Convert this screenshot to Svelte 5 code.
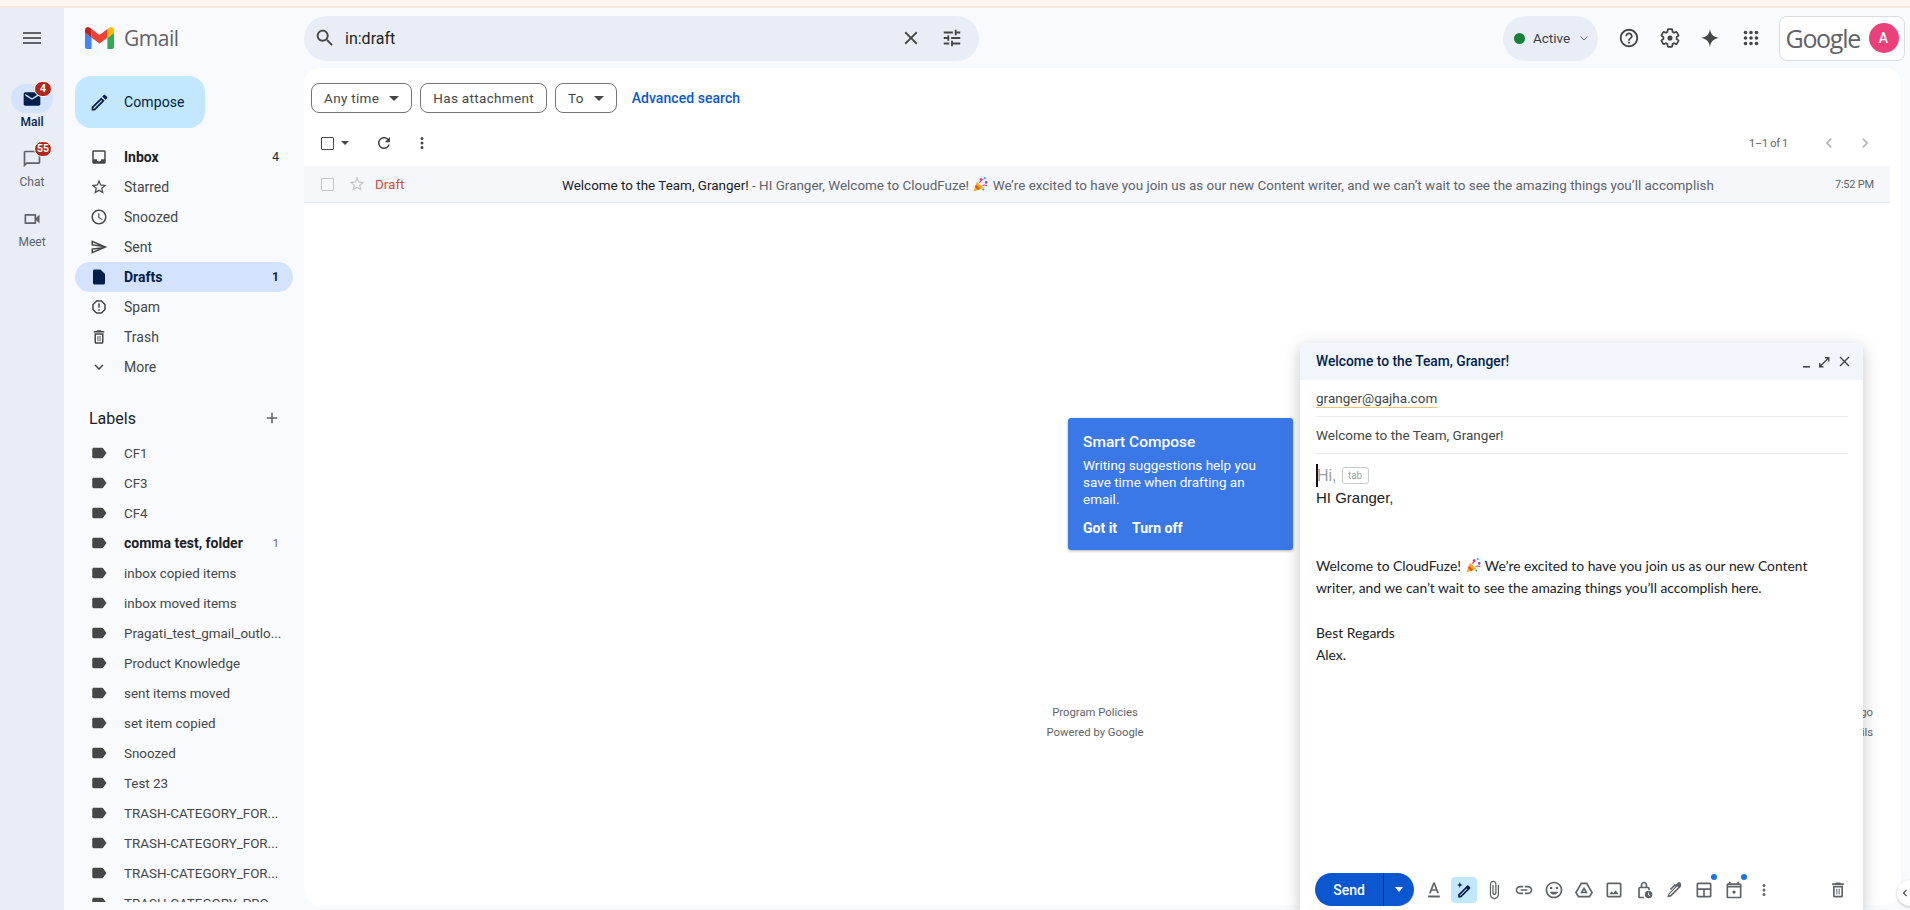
<script lang="ts">
  const icons: Record<string, string> = {
    menu: "M3 18h18v-2H3v2zm0-5h18v-2H3v2zm0-7v2h18V6H3z",
    search: "M15.5 14h-.79l-.28-.27C15.41 12.59 16 11.11 16 9.5 16 5.91 13.09 3 9.5 3S3 5.91 3 9.5 5.91 16 9.5 16c1.61 0 3.09-.59 4.23-1.57l.27.28v.79l5 4.99L20.49 19l-4.99-5zm-6 0C7.01 14 5 11.99 5 9.5S7.01 5 9.5 5 14 7.01 14 9.5 11.99 14 9.5 14z",
    close: "M19 6.41L17.59 5 12 10.59 6.41 5 5 6.41 10.59 12 5 17.59 6.41 19 12 13.41 17.59 19 19 17.59 13.41 12z",
    tune: "M3 17v2h6v-2H3zM3 5v2h10V5H3zm10 16v-2h8v-2h-8v-2h-2v6h2zM7 9v2H3v2h4v2h2V9H7zm14 4v-2H11v2h10zm-6-4h2V7h4V5h-4V3h-2v6z",
    help: "M11 18h2v-2h-2v2zm1-16C6.48 2 2 6.48 2 12s4.48 10 10 10 10-4.48 10-10S17.52 2 12 2zm0 18c-4.41 0-8-3.59-8-8s3.59-8 8-8 8 3.59 8 8-3.59 8-8 8zm0-14c-2.21 0-4 1.79-4 4h2c0-1.1.9-2 2-2s2 .9 2 2c0 2-3 1.75-3 5h2c0-2.25 3-2.5 3-5 0-2.21-1.79-4-4-4z",
    spark: "M12 2C12.6 8 16 11.4 22 12 16 12.6 12.6 16 12 22 11.4 16 8 12.6 2 12 8 11.4 11.4 8 12 2z",
    apps: "M6 4a2 2 0 1 0 0 4 2 2 0 0 0 0-4zm6 0a2 2 0 1 0 0 4 2 2 0 0 0 0-4zm6 0a2 2 0 1 0 0 4 2 2 0 0 0 0-4zM6 10a2 2 0 1 0 0 4 2 2 0 0 0 0-4zm6 0a2 2 0 1 0 0 4 2 2 0 0 0 0-4zm6 0a2 2 0 1 0 0 4 2 2 0 0 0 0-4zM6 16a2 2 0 1 0 0 4 2 2 0 0 0 0-4zm6 0a2 2 0 1 0 0 4 2 2 0 0 0 0-4zm6 0a2 2 0 1 0 0 4 2 2 0 0 0 0-4z",
    edit: "M14.06 9.02l.92.92L5.92 19H5v-.92l9.06-9.06M17.66 3c-.25 0-.51.1-.7.29l-1.83 1.83 3.75 3.75 1.83-1.83c.39-.39.39-1.02 0-1.41l-2.34-2.34c-.2-.2-.45-.29-.71-.29zm-3.6 3.19L3 17.25V21h3.75L17.81 9.94l-3.75-3.75z",
    inbox: "M19 3H4.99c-1.11 0-1.98.89-1.98 2L3 19c0 1.1.88 2 1.99 2H19c1.1 0 2-.9 2-2V5c0-1.11-.9-2-2-2zm0 12h-4c0 1.66-1.35 3-3 3s-3-1.34-3-3H4.99V5H19v10z",
    star: "M22 9.24l-7.19-.62L12 2 9.19 8.63 2 9.24l5.46 4.73L5.82 21 12 17.27 18.18 21l-1.63-7.03L22 9.24zM12 15.4l-3.76 2.27 1-4.28-3.32-2.88 4.38-.38L12 6.1l1.71 4.04 4.38.38-3.32 2.88 1 4.28L12 15.4z",
    clock: "M11.99 2C6.47 2 2 6.48 2 12s4.47 10 9.99 10C17.52 22 22 17.52 22 12S17.52 2 11.99 2zM12 20c-4.42 0-8-3.58-8-8s3.58-8 8-8 8 3.58 8 8-3.58 8-8 8zM12.5 7H11v6l5.25 3.15.75-1.23-4.5-2.67z",
    send: "M4.01 6.03l7.51 3.22-7.52-1 .01-2.22m7.5 8.72L4 17.97v-2.22l7.51-1M2.01 3L2 10l15 2-15 2 .01 7L23 12 2.01 3z",
    draft: "M6 2c-1.1 0-2 .9-2 2v16c0 1.1.89 2 1.99 2H18c1.1 0 2-.9 2-2V8l-6-6H6z",
    spam: "M15.73 3H8.27L3 8.27v7.46L8.27 21h7.46L21 15.73V8.27L15.73 3zM19 14.9L14.9 19H9.1L5 14.9V9.1L9.1 5h5.8L19 9.1v5.8zM11 7h2v6h-2zM11 15h2v2h-2z",
    trash: "M16 9v10H8V9h8m-1.5-6h-5l-1 1H5v2h14V4h-3.5l-1-1zM18 7H6v12c0 1.1.9 2 2 2h8c1.1 0 2-.9 2-2V7zM10 10.5h1.2v7H10zM12.8 10.5H14v7h-1.2z",
    more: "M16.59 8.59L12 13.17 7.41 8.59 6 10l6 6 6-6z",
    add: "M19 13h-6v6h-2v-6H5v-2h6V5h2v6h6v2z",
    label: "M17.63 5.84C17.27 5.33 16.67 5 16 5L5 5.01C3.9 5.01 3 5.9 3 7v10c0 1.1.9 1.99 2 1.99L16 19c.67 0 1.27-.33 1.63-.84L22 12l-4.37-6.16z",
    refresh: "M17.65 6.35C16.2 4.9 14.21 4 12 4c-4.42 0-7.99 3.58-7.99 8s3.57 8 7.99 8c3.73 0 6.84-2.55 7.73-6h-2.08c-.82 2.33-3.04 4-5.65 4-3.31 0-6-2.69-6-6s2.69-6 6-6c1.66 0 3.14.69 4.22 1.78L13 11h7V4l-2.35 2.35z",
    dots: "M12 8a2 2 0 1 0 0-4 2 2 0 0 0 0 4zm0 2a2 2 0 1 0 0 4 2 2 0 0 0 0-4zm0 6a2 2 0 1 0 0 4 2 2 0 0 0 0-4z",
    left: "M15.41 7.41L14 6l-6 6 6 6 1.41-1.41L10.83 12z",
    right: "M10 6L8.59 7.41 13.17 12l-4.58 4.59L10 18l6-6z",
    mail: "M20 4H4c-1.1 0-1.99.9-1.99 2L2 18c0 1.1.9 2 2 2h16c1.1 0 2-.9 2-2V6c0-1.1-.9-2-2-2zm0 4l-8 5-8-5V6l8 5 8-5v2z",
    chat: "M20 2H4c-1.1 0-2 .9-2 2v18l4-4h14c1.1 0 2-.9 2-2V4c0-1.1-.9-2-2-2zm0 14H5.17L4 17.17V4h16v12z",
    meet: "M15 8v8H5V8h10m1-2H4c-.55 0-1 .45-1 1v10c0 .55.45 1 1 1h12c.55 0 1-.45 1-1v-3.5l4 4v-11l-4 4V7c0-.55-.45-1-1-1z",
    format: "M5 18.5h14V21H5zM11 3L6 16h2.25l1.12-3h5.26l1.12 3H18L13 3h-2zm-.9 8L12 5.67 13.9 11h-3.8z",
    smart: "M18.9 8.2l-1.6-1.6a1.1 1.1 0 0 0-1.5 0L5 17.4V21h3.6L19.4 10.2c.4-.4.4-1.1 0-1.5l-.5-.5zM7.8 19H7v-.8l8-8 .8.8-8 8zM7 2.5l.9 2.6 2.6.9-2.6.9L7 9.5l-.9-2.6L3.5 6l2.6-.9z",
    attach: "M16.5 6v11.5c0 2.21-1.79 4-4 4s-4-1.79-4-4V5c0-1.38 1.12-2.5 2.5-2.5s2.5 1.12 2.5 2.5v10.5c0 .55-.45 1-1 1s-1-.45-1-1V6H10v9.5c0 1.38 1.12 2.5 2.5 2.5s2.5-1.12 2.5-2.5V5c0-2.21-1.79-4-4-4S7 2.79 7 5v12.5c0 3.04 2.46 5.5 5.5 5.5s5.5-2.46 5.5-5.5V6h-1.5z",
    link: "M3.9 12c0-1.71 1.39-3.1 3.1-3.1h4V7H7c-2.76 0-5 2.24-5 5s2.24 5 5 5h4v-1.9H7c-1.71 0-3.1-1.39-3.1-3.1zM8 13h8v-2H8v2zm9-6h-4v1.9h4c1.71 0 3.1 1.39 3.1 3.1s-1.39 3.1-3.1 3.1h-4V17h4c2.76 0 5-2.24 5-5s-2.24-5-5-5z",
    emoji: "M11.99 2C6.47 2 2 6.48 2 12s4.47 10 9.99 10C17.52 22 22 17.52 22 12S17.52 2 11.99 2zM12 20c-4.42 0-8-3.58-8-8s3.58-8 8-8 8 3.58 8 8-3.58 8-8 8zM8.5 8a1.5 1.5 0 1 0 0 3 1.5 1.5 0 0 0 0-3zm7 0a1.5 1.5 0 1 0 0 3 1.5 1.5 0 0 0 0-3zM12 17.5c2.33 0 4.31-1.46 5.11-3.5H6.89c.8 2.04 2.78 3.5 5.11 3.5z",
    drive: "M8.2 3h7.6l7 12-3.6 6H4.8l-3.6-6 7-12zm1.15 2L3.5 15l2.45 4h12.1l2.45-4-5.85-10H9.35zM12 8.2l4.6 7.8H7.4L12 8.2zm0 3.9L10.9 14h2.2L12 12.1z",
    photo: "M19 3H5c-1.1 0-2 .9-2 2v14c0 1.1.9 2 2 2h14c1.1 0 2-.9 2-2V5c0-1.1-.9-2-2-2zm0 16H5V5h14v14zM13.96 12.29l-2.75 3.54-1.96-2.36L6.5 17h11z",
    lock: "M17 8h-1V6c0-2.2-1.8-4-4-4S8 3.800 8 6v2H7c-1.1 0-2 .9-2 2v10c0 1.1.9 2 2 2h5v-2H7V10h10v2h2v-2c0-1.100-.9-2-2-2zm-3 0h-4V6c0-1.100.9-2 2-2s2 .9 2 2v2zM17.500 13a4.500 4.500 0 1 0 0 9 4.500 4.500 0 0 0 0-9zm.5 2v2.300l1.500 1-.6.8-1.900-1.300V15h1z",
    pen: "M19.700 3.300a2.300 2.300 0 0 0-3.300 0L14 5.700l-1-1-6 6 1.400 1.400L13 7.500l.6.6-8.300 8.300L4 21l4.600-1.300L20 8.300c1-.9 1-3.500-.3-5zM7.600 18l-1.400.4.400-1.400L16 7.600l1 1L7.600 18z",
    layout: "M19 3H5c-1.100 0-2 .9-2 2v14c0 1.100.9 2 2 2h14c1.100 0 2-.9 2-2V5c0-1.100-.9-2-2-2zM5 5h14v5H5V5zm0 7h6v7H5v-7zm8 7v-7h6v7h-6z",
    cal: "M19 4h-1V2h-2v2H8V2H6v2H5c-1.100 0-2 .9-2 2v14c0 1.100.9 2 2 2h14c1.100 0 2-.9 2-2V6c0-1.100-.9-2-2-2zm0 16H5V9h14v11zm0-13H5V6h14v1zM12 12.500a2 2 0 1 0 0 4 2 2 0 0 0 0-4z",
  };

  const nav = [
    { name: "Inbox", icon: "inbox", count: "4", bold: true },
    { name: "Starred", icon: "star" },
    { name: "Snoozed", icon: "clock" },
    { name: "Sent", icon: "send" },
    { name: "Drafts", icon: "draft", count: "1", active: true },
    { name: "Spam", icon: "spam" },
    { name: "Trash", icon: "trash" },
    { name: "More", icon: "more" },
  ];

  const labels = [
    "CF1", "CF3", "CF4", "comma test, folder", "inbox copied items", "inbox moved items",
    "Pragati_test_gmail_outlo...", "Product Knowledge", "sent items moved", "set item copied",
    "Snoozed", "Test 23", "TRASH-CATEGORY_FOR...", "TRASH-CATEGORY_FOR...",
    "TRASH-CATEGORY_FOR...", "TRASH-CATEGORY_PRO...",
  ];

  const tools = ["format", "smart", "attach", "link", "emoji", "drive", "photo", "lock", "pen", "layout", "cal", "dots"];
</script>

{#snippet icon(name: string, size: number, color: string)}
  <svg class="ico" width={size} height={size} viewBox="0 0 24 24" fill={color}><path d={icons[name]} /></svg>
{/snippet}

{#snippet popper()}
  <svg class="popper" width="17" height="17" viewBox="0 0 24 24">
    <path d="M2 22l5-14 9 9z" fill="#f9a825" />
    <path d="M5.500 12.500l6 6-3 1.200-4.200-4.200z" fill="#e65100" />
    <circle cx="13" cy="5" r="2" fill="#e91e63" />
    <circle cx="20" cy="9" r="2" fill="#7e57c2" />
    <circle cx="18" cy="3" r="1.500" fill="#29b6f6" />
    <path d="M10 9c3-1 3-4 3-4M15 14c2-2 5-1 6 0" stroke="#ec407a" stroke-width="1.600" fill="none" />
    <circle cx="16" cy="19" r="1.500" fill="#43a047" />
  </svg>
{/snippet}

<div class="page">
  <div class="strip"></div>

  <div class="shell">
    <aside class="rail">
      {@render icon("menu", 24, "#5f6368")}
      <div class="rail-items">
        <div class="rail-item current">
          <div class="pill">
            {@render icon("mail", 20, "#041e49")}
            <span class="badge">4</span>
          </div>
          <span>Mail</span>
        </div>
        <div class="rail-item">
          <div class="pill">
            {@render icon("chat", 20, "#5f6368")}
            <span class="badge">55</span>
          </div>
          <span>Chat</span>
        </div>
        <div class="rail-item">
          <div class="pill">{@render icon("meet", 20, "#5f6368")}</div>
          <span>Meet</span>
        </div>
      </div>
    </aside>

    <nav class="side">
      <div class="brand">
        <svg width="29" height="22" viewBox="52 42 88 66">
          <path fill="#4285f4" d="M58 108h14V74L52 59v43c0 3.320 2.690 6 6 6" />
          <path fill="#34a853" d="M120 108h14c3.320 0 6-2.690 6-6V59l-20 15" />
          <path fill="#fbbc04" d="M120 48v26l20-15v-8c0-7.420-8.470-11.650-14.400-7.200" />
          <path fill="#ea4335" d="M72 74V48l24 18 24-18v26L96 92" />
          <path fill="#c5221f" d="M52 51v8l20 15V48l-5.600-4.200c-5.940-4.450-14.400-.22-14.400 7.200" />
        </svg>
        <span class="wordmark">Gmail</span>
      </div>

      <button class="compose">
        {@render icon("edit", 21, "#041e49")}
        <span>Compose</span>
      </button>

      <ul class="folders">
        {#each nav as item}
          <li class="row" class:active={item.active} class:bold={item.bold}>
            {@render icon(item.icon, 18, item.active ? "#041e49" : "#444746")}
            <span class="name">{item.name}</span>
            {#if item.count}<span class="count">{item.count}</span>{/if}
          </li>
        {/each}
      </ul>

      <div class="labels-head">
        <span>Labels</span>
        {@render icon("add", 18, "#5f6368")}
      </div>

      <ul class="folders label-list">
        {#each labels as name}
          <li class="row" class:bold={name.startsWith("comma")}>
            {@render icon("label", 18, "#444746")}
            <span class="name">{name}</span>
            {#if name.startsWith("comma")}<span class="count small">1</span>{/if}
          </li>
        {/each}
      </ul>
    </nav>

    <div class="content">
      <header class="topbar">
        <div class="search">
          {@render icon("search", 22, "#444746")}
          <span class="query">in:draft</span>
          <span class="search-end">
            {@render icon("close", 22, "#444746")}
            {@render icon("tune", 22, "#444746")}
          </span>
        </div>

        <div class="status">
          <span class="dot"></span>
          <span>Active</span>
          <svg class="chev" width="10" height="10" viewBox="0 0 10 10"><path d="M1.500 3.500L5 7l3.500-3.500" fill="none" stroke="#5f6368" stroke-width="1" /></svg>
        </div>

        <div class="top-icons">
          {@render icon("help", 22, "#444746")}
          <svg width="22" height="22" viewBox="0 0 24 24">
            <path d="M19.140 12.940c.04-.3.060-.61.060-.94 0-.32-.02-.64-.07-.94l2.030-1.580c.18-.14.23-.41.12-.61l-1.920-3.320c-.12-.22-.37-.29-.59-.22l-2.390.96c-.5-.38-1.030-.7-1.620-.94l-.36-2.540c-.04-.24-.24-.41-.48-.41h-3.840c-.24 0-.43.17-.47.41l-.36 2.540c-.59.24-1.130.57-1.620.94l-2.390-.96c-.22-.08-.47 0-.59.22L2.740 8.870c-.12.21-.08.47.12.61l2.030 1.580c-.05.3-.09.63-.09.94s.02.64.07.94l-2.030 1.580c-.18.14-.23.41-.12.61l1.920 3.320c.12.22.37.29.59.22l2.390-.96c.5.38 1.030.7 1.620.94l.36 2.540c.05.24.24.41.48.41h3.840c.24 0 .44-.17.47-.41l.36-2.540c.59-.24 1.130-.56 1.620-.94l2.390.96c.22.08.47 0 .59-.22l1.920-3.320c.12-.22.07-.47-.12-.61l-2.010-1.580z" fill="none" stroke="#444746" stroke-width="1.900" />
            <circle cx="12" cy="12" r="2.800" fill="#444746" />
          </svg>
          {@render icon("spark", 22, "#444746")}
          {@render icon("apps", 22, "#444746")}
        </div>

        <div class="account">
          <span class="google">Google</span>
          <span class="avatar">A</span>
        </div>
      </header>

      <main class="panel">
        <div class="filters">
          <span class="chip">Any time <i class="tri"></i></span>
          <span class="chip">Has attachment</span>
          <span class="chip">To <i class="tri"></i></span>
          <span class="advanced">Advanced search</span>
        </div>

        <div class="toolbar">
          <span class="box"></span>
          <i class="tri tiny"></i>
          <span class="tb-refresh">{@render icon("refresh", 18, "#444746")}</span>
          <span class="tb-dots">{@render icon("dots", 18, "#444746")}</span>
          <span class="pager">1–1 of 1</span>
          <span class="pager-nav">
            {@render icon("left", 20, "#b4b7bb")}
            {@render icon("right", 20, "#b4b7bb")}
          </span>
        </div>

        <div class="mail-row">
          <span class="box faded"></span>
          <span class="row-star">{@render icon("star", 18, "#c4c7c5")}</span>
          <span class="sender">Draft</span>
          <span class="preview">
            <span class="subject">Welcome to the Team, Granger!</span> - HI Granger, Welcome to CloudFuze! {@render popper()} We’re excited to have you join us as our new Content writer, and we can’t wait to see the amazing things you’ll accomplish
          </span>
          <span class="time">7:52 PM</span>
        </div>

        <footer class="foot">
          <span></span>
          <div class="foot-mid">
            <div>Program Policies</div>
            <div>Powered by Google</div>
          </div>
          <div class="foot-right">
            <div>Last account activity: 1 minute ago</div>
            <div>Details</div>
          </div>
        </footer>
      </main>
    </div>
  </div>

  <div class="tip">
    <h4>Smart Compose</h4>
    <p>Writing suggestions help you save time when drafting an email.</p>
    <div class="tip-actions"><span>Got it</span><span>Turn off</span></div>
  </div>

  <section class="composer">
    <div class="composer-head">
      <span class="head-title">Welcome to the Team, Granger!</span>
      <span class="win-btns">
        <svg class="win-min" width="14" height="14" viewBox="0 0 14 14"><path d="M3 11h7v1.600H3z" fill="#444746" /></svg>
        <svg width="14" height="14" viewBox="0 0 14 14"><path d="M8 2h4.500v4.500h-1.400V4.400L4.400 11.100h2.100v1.400H2V8h1.400v2.100l6.700-6.700H8z" fill="#444746" /></svg>
        {@render icon("close", 17, "#444746")}
      </span>
    </div>

    <div class="field"><span class="recipient">granger@gajha.com</span></div>
    <div class="field subj">Welcome to the Team, Granger!</div>

    <div class="body">
      <div class="ghost"><span class="cursor"></span>Hi, <kbd>tab</kbd></div>
      <div class="hello">HI Granger,</div>
      <p>Welcome to CloudFuze! {@render popper()} We’re excited to have you join us as our new Content<br />writer, and we can’t wait to see the amazing things you’ll accomplish here.</p>
      <p>Best Regards<br />Alex.</p>
    </div>

    <div class="composer-foot">
      <div class="send">
        <span class="send-main">Send</span>
        <span class="send-more"><i class="tri white"></i></span>
      </div>
      <div class="tools">
        {#each tools as t}
          <span class="tool" class:on={t === "smart"} class:dotted={t === "layout" || t === "cal"}>
            {@render icon(t, t === "dots" ? 18 : 20, t === "smart" ? "#041e49" : "#5f6368")}
          </span>
        {/each}
      </div>
      <span class="bin">{@render icon("trash", 20, "#5f6368")}</span>
    </div>
  </section>

  <div class="side-toggle">{@render icon("left", 14, "#444746")}</div>
</div>

<style>
  :global(body) {
    margin: 0;
    font-family: Roboto, "Liberation Sans", sans-serif;
  }

  .page {
    position: relative;
    width: 1910px;
    height: 910px;
    overflow: hidden;
    display: flex;
    flex-direction: column;
    background: #f8fafd;
    color: #1f1f1f;
    font-size: 14px;
  }

  .ico {
    flex: none;
    display: block;
  }

  .strip {
    height: 6px;
    flex: none;
    background: #fff6f2;
    border-bottom: 2px solid #fbe5df;
  }

  .shell {
    flex: 1;
    min-height: 0;
    display: flex;
  }

  /* left app rail */
  .rail {
    width: 64px;
    flex: none;
    background: #e9eef6;
    display: flex;
    flex-direction: column;
    align-items: center;
    padding-top: 18px;
  }

  .rail-items {
    margin-top: 34px;
    display: flex;
    flex-direction: column;
    gap: 13px;
  }

  .rail-item {
    display: flex;
    flex-direction: column;
    align-items: center;
    font-size: 12px;
    line-height: 18px;
    color: #5f6368;
  }

  .rail-item.current {
    color: #041e49;
    font-weight: 500;
  }

  .pill {
    position: relative;
    width: 42px;
    height: 29px;
    border-radius: 15px;
    display: flex;
    align-items: center;
    justify-content: center;
  }

  .current .pill {
    background: #d3e3fd;
  }

  .badge {
    position: absolute;
    top: -3px;
    left: 23px;
    min-width: 14px;
    height: 14px;
    padding: 0 1px;
    border: 1px solid #fff;
    border-radius: 8px;
    background: #b3261e;
    color: #fff;
    font-size: 10.5px;
    font-weight: 700;
    line-height: 14px;
    text-align: center;
  }

  /* sidebar */
  .side {
    width: 240px;
    flex: none;
    box-sizing: border-box;
    padding-left: 11px;
    margin-bottom: 8px;
    overflow: hidden;
  }

  .brand {
    height: 60px;
    display: flex;
    align-items: center;
    gap: 10px;
    padding-left: 10px;
  }

  .wordmark {
    font-family: "Open Sans", sans-serif;
    font-size: 21px;
    letter-spacing: -0.5px;
    color: #5f6368;
  }

  .compose {
    margin-top: 8px;
    width: 130px;
    height: 52px;
    border: 0;
    border-radius: 16px;
    background: #c2e7ff;
    color: #001d35;
    display: flex;
    align-items: center;
    gap: 14px;
    padding: 0 0 0 14px;
    font: 400 14px Roboto, sans-serif;
    letter-spacing: 0.1px;
  }

  .folders {
    list-style: none;
    margin: 14px 0 0;
    padding: 0;
  }

  .labels-head + .folders {
    margin-top: 2px;
  }

  .row {
    width: 218px;
    height: 30px;
    box-sizing: border-box;
    border-radius: 15px;
    display: flex;
    align-items: center;
    gap: 16px;
    padding: 0 14px 0 15px;
    color: #444746;
  }

  .row.active {
    background: #d3e3fd;
    color: #041e49;
    font-weight: 700;
  }

  .row.bold {
    color: #202124;
    font-weight: 700;
  }

  .label-list .row:not(.bold) .name {
    font-size: 13.4px;
  }

  .name {
    flex: 1;
    min-width: 0;
    white-space: nowrap;
  }

  .count {
    font-size: 12px;
    font-weight: 400;
  }

  .row.active .count {
    font-weight: 700;
  }

  .count.small {
    font-size: 11px;
    color: #5f6368;
  }

  .labels-head {
    margin-top: 18px;
    height: 36px;
    width: 218px;
    box-sizing: border-box;
    padding: 0 12px 0 14px;
    display: flex;
    align-items: center;
    justify-content: space-between;
    font-size: 16px;
    color: #202124;
  }

  /* top bar */
  .content {
    flex: 1;
    min-width: 0;
    display: flex;
    flex-direction: column;
  }

  .topbar {
    height: 60px;
    flex: none;
    display: flex;
    align-items: center;
  }

  .search {
    width: 675px;
    height: 45px;
    box-sizing: border-box;
    border-radius: 23px;
    background: #e9eef6;
    display: flex;
    align-items: center;
    padding: 0 16px 0 10px;
    font-size: 16px;
    color: #1f1f1f;
  }

  .query {
    margin-left: 9px;
  }

  .search-end {
    margin-left: auto;
    display: flex;
    gap: 19px;
  }

  .status {
    margin-left: 524px;
    width: 95px;
    height: 45px;
    box-sizing: border-box;
    border-radius: 23px;
    background: #e9eef6;
    display: flex;
    align-items: center;
    gap: 8px;
    padding-left: 11px;
    font-size: 13.5px;
    color: #3c4043;
  }

  .dot {
    width: 11px;
    height: 11px;
    border-radius: 50%;
    background: #188038;
  }

  .chev {
    margin-left: 1px;
  }

  .top-icons {
    margin-left: 20px;
    display: flex;
    gap: 18.5px;
  }

  .account {
    margin-left: 17px;
    width: 126px;
    height: 45px;
    box-sizing: border-box;
    border: 1px solid #dadce0;
    border-radius: 8px;
    background: #fff;
    display: flex;
    align-items: center;
    padding: 0 5px 0 6px;
  }

  .google {
    font-family: "Open Sans", sans-serif;
    font-size: 25px;
    letter-spacing: -1.3px;
    color: #5f6368;
  }

  .avatar {
    margin-left: auto;
    width: 30px;
    height: 30px;
    border-radius: 50%;
    background: #ec407a;
    color: #fff;
    font-size: 14px;
    font-weight: 500;
    line-height: 30px;
    text-align: center;
  }

  /* mail panel */
  .panel {
    flex: 1;
    min-height: 0;
    margin: 0 9px 5px 0;
    border-radius: 16px;
    background: #fff;
    display: flex;
    flex-direction: column;
  }

  .filters {
    margin-top: 15px;
    padding-left: 7px;
    display: flex;
    align-items: center;
    gap: 8px;
  }

  .chip {
    height: 30px;
    box-sizing: border-box;
    border: 1px solid #747775;
    border-radius: 8px;
    padding: 0 12px;
    display: flex;
    align-items: center;
    font-size: 13.5px;
    letter-spacing: 0.32px;
    color: #444746;
  }

  .tri {
    display: inline-block;
    width: 0;
    height: 0;
    border: 5px solid transparent;
    border-top-color: #444746;
    border-bottom-width: 0;
    margin-left: 10px;
  }

  .tri.tiny {
    border-width: 4px 4px 0;
    margin-left: 7px;
  }

  .tri.white {
    border-top-color: #fff;
    border-width: 5px 4.500px 0;
    margin: 0;
  }

  .advanced {
    margin-left: 7px;
    color: #0b57d0;
    font-weight: 500;
    letter-spacing: 0.05px;
  }

  .toolbar {
    margin-top: 7px;
    height: 46px;
    padding-left: 17px;
    display: flex;
    align-items: center;
    font-size: 11px;
    color: #5f6368;
  }

  .box {
    width: 11px;
    height: 11px;
    flex: none;
    border: 1.5px solid #444746;
    border-radius: 1px;
  }

  .box.faded {
    border-color: #c4c7c5;
  }

  .tb-refresh {
    margin-left: 26px;
  }

  .tb-dots {
    margin-left: 20px;
  }

  .pager {
    margin-left: auto;
    letter-spacing: -0.3px;
  }

  .pager-nav {
    display: flex;
    gap: 16px;
    margin-left: 31px;
    margin-right: 26px;
  }

  .mail-row {
    height: 37px;
    flex: none;
    box-sizing: border-box;
    margin-right: 11px;
    padding-left: 17px;
    background: #f5f7fb;
    border-bottom: 1px solid #e0e4ec;
    display: flex;
    align-items: center;
    font-size: 13.45px;
    white-space: nowrap;
    color: #5f6368;
  }

  .row-star {
    margin-left: 14px;
  }

  .sender {
    margin-left: 9px;
    width: 187px;
    color: #d44c43;
  }

  .preview {
    flex: 1;
    min-width: 0;
    overflow: hidden;
  }

  .subject {
    color: #202124;
  }

  .popper {
    display: inline-block;
    vertical-align: -3px;
  }

  .time {
    margin-right: 16px;
    font-size: 11px;
    letter-spacing: -0.2px;
  }

  .foot {
    margin-top: 500px;
    padding: 0 28px 0 13px;
    display: grid;
    grid-template-columns: 1fr auto 1fr;
    font-size: 11.3px;
    line-height: 19.5px;
    color: #5f6368;
  }

  .foot-mid {
    text-align: center;
  }

  .foot-right {
    text-align: right;
  }

  /* smart compose popup */
  .tip {
    position: absolute;
    left: 1068px;
    top: 418px;
    width: 225px;
    height: 132px;
    box-sizing: border-box;
    padding: 14px 15px;
    border-radius: 3px;
    background: #3b78e7;
    box-shadow: 0 1px 3px rgba(60, 64, 67, 0.4);
    color: #fff;
  }

  .tip h4 {
    margin: 0;
    font-size: 15.5px;
    font-weight: 500;
    line-height: 20px;
  }

  .tip p {
    margin: 5px 0 0;
    font-size: 13.5px;
    line-height: 17px;
  }

  .tip-actions {
    margin-top: 12px;
    display: flex;
    gap: 15px;
    font-weight: 700;
  }

  /* compose window */
  .composer {
    position: absolute;
    left: 1300px;
    top: 343px;
    width: 563px;
    height: 567px;
    display: flex;
    flex-direction: column;
    border-radius: 8px 8px 0 0;
    background: #fff;
    box-shadow: 0 4px 16px rgba(60, 64, 67, 0.3);
  }

  .composer-head {
    height: 37px;
    flex: none;
    box-sizing: border-box;
    padding: 0 10px 0 16px;
    border-radius: 8px 8px 0 0;
    background: #f2f6fc;
    display: flex;
    align-items: center;
    justify-content: space-between;
    color: #041e49;
  }

  .head-title {
    margin-top: -2px;
    font-weight: 500;
    font-size: 13.8px;
  }

  .win-btns {
    display: flex;
    align-items: center;
    gap: 5px;
  }

  .win-min {
    margin-right: -2px;
  }

  .field {
    height: 37px;
    flex: none;
    box-sizing: border-box;
    margin: 0 15px 0 16px;
    border-bottom: 1px solid #e8eaed;
    display: flex;
    align-items: center;
    font-size: 13.5px;
    color: #444746;
  }

  .recipient {
    border-bottom: 1px solid #f0c674;
    line-height: 18px;
  }

  .body {
    flex: 1;
    min-height: 0;
    padding: 10px 16px 0;
    color: #202124;
  }

  .ghost {
    height: 23px;
    display: flex;
    align-items: center;
    font: 16px/23px "Liberation Sans", sans-serif;
    color: #9aa0a6;
  }

  .cursor {
    width: 2px;
    height: 23px;
    margin-right: -1px;
    background: #111;
  }

  kbd {
    margin-left: 5px;
    width: 25px;
    height: 15px;
    border: 1px solid #c8cacc;
    border-radius: 3px;
    font: 10px/15px Roboto, sans-serif;
    text-align: center;
    color: #a0a4a8;
  }

  .hello {
    font: 15px/22px "Liberation Sans", sans-serif;
  }

  .body p {
    margin: 0;
    font: 13.85px/22px Lato, sans-serif;
  }

  .hello + p {
    margin-top: 46px;
  }

  .body p + p {
    margin-top: 23px;
  }

  .composer-foot {
    flex: none;
    padding: 0 10px 4px 15px;
    display: flex;
    align-items: center;
  }

  .send {
    width: 99px;
    height: 33px;
    flex: none;
    border-radius: 17px;
    background: #0b57d0;
    color: #fff;
    display: flex;
    align-items: stretch;
    font-weight: 500;
  }

  .send-main {
    width: 68px;
    display: flex;
    align-items: center;
    justify-content: center;
    border-right: 1px solid #041e49;
  }

  .send-more {
    flex: 1;
    display: flex;
    align-items: center;
    justify-content: center;
  }

  .tools {
    margin-left: 5px;
    display: flex;
  }

  .tool {
    position: relative;
    width: 30px;
    height: 26px;
    display: flex;
    align-items: center;
    justify-content: center;
  }

  .tool.on::before {
    content: "";
    position: absolute;
    inset: 0 2px;
    border-radius: 4px;
    background: #c2e7ff;
  }

  .tool.on :global(svg) {
    position: relative;
  }

  .tool.dotted::after {
    content: "";
    position: absolute;
    top: -3px;
    right: 2px;
    width: 6px;
    height: 6px;
    border-radius: 50%;
    background: #1a73e8;
  }

  .bin {
    margin-left: auto;
    width: 30px;
    display: flex;
    justify-content: center;
  }

  .side-toggle {
    position: absolute;
    left: 1897px;
    top: 880px;
    width: 26px;
    height: 26px;
    border-radius: 50%;
    background: #fff;
    box-shadow: 0 1px 3px rgba(60, 64, 67, 0.3);
    display: flex;
    align-items: center;
    padding-left: 1px;
  }
</style>
